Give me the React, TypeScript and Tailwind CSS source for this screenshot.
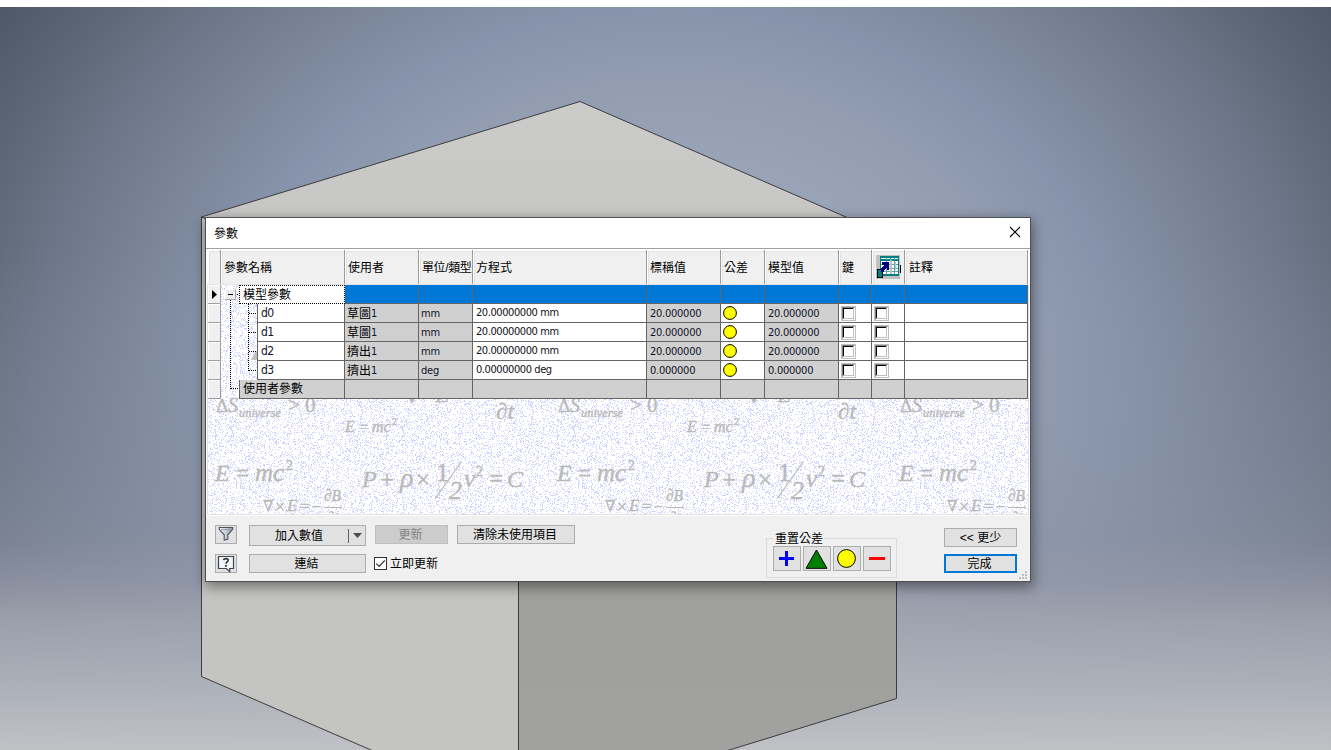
import React from "react";

const UI = "font-['DejaVu_Sans_Condensed','Noto_Sans_CJK_TC',sans-serif]";
const CJK = "font-['Liberation_Sans','Noto_Sans_CJK_TC',sans-serif]";
const GRID =
  "grid grid-cols-[13px_124px_74px_54px_174px_74px_44px_74px_33px_33px_123px]";

function buildNoise(width: number, height: number) {
  let state = 90713;
  const next = () => {
    state = (state + 0x6d2b79f5) | 0;
    let t = Math.imul(state ^ (state >>> 15), 1 | state);
    t = (t + Math.imul(t ^ (t >>> 7), 61 | t)) ^ t;
    return ((t ^ (t >>> 14)) >>> 0) / 4294967296;
  };
  let d = "";
  for (let y = 0; y < height; y++) {
    for (let x = 0; x < width; x++) {
      if (next() < 0.2) d += `M${x} ${y}h1v1h-1z`;
    }
  }
  return d;
}

const NOISE = buildNoise(171, 115);

type Glyph = { t: string; x: number; y: number; s: number; up?: boolean; w?: number };

const GLYPHS: Glyph[] = [
  { t: "Δ", x: 216, y: 412, s: 19, up: true },
  { t: "S", x: 228, y: 412, s: 20 },
  { t: "universe", x: 239, y: 417, s: 13, w: 42 },
  { t: ">", x: 288, y: 412, s: 21, up: true },
  { t: "0", x: 305, y: 412, s: 21, up: true },
  { t: "∇×E", x: 404, y: 402, s: 21, w: 45 },
  { t: "∂t", x: 496, y: 419, s: 23, w: 18 },
  { t: "E", x: 345, y: 432, s: 16 },
  { t: "=", x: 360, y: 432, s: 15, up: true },
  { t: "mc", x: 372, y: 432, s: 16 },
  { t: "2", x: 392, y: 425, s: 10, up: true },
  { t: "E", x: 215, y: 481, s: 24 },
  { t: "=", x: 236, y: 481, s: 23, up: true },
  { t: "mc", x: 255, y: 481, s: 25 },
  { t: "2", x: 286, y: 470, s: 14, up: true },
  { t: "P", x: 362, y: 487, s: 24 },
  { t: "+", x: 380, y: 488, s: 25, up: true },
  { t: "ρ", x: 400, y: 487, s: 28 },
  { t: "×", x: 416, y: 488, s: 25, up: true },
  { t: "1", x: 436, y: 481, s: 26, up: true },
  { t: "2", x: 449, y: 499, s: 26 },
  { t: "v", x: 464, y: 487, s: 25 },
  { t: "2", x: 476, y: 476, s: 14, up: true },
  { t: "=", x: 489, y: 487, s: 25, up: true },
  { t: "C", x: 507, y: 487, s: 24 },
  { t: "∇", x: 263, y: 511, s: 15, up: true },
  { t: "×", x: 275, y: 513, s: 18, up: true },
  { t: "E", x: 287, y: 511, s: 17 },
  { t: "=", x: 300, y: 512, s: 17, up: true },
  { t: "−", x: 312, y: 512, s: 16, up: true },
  { t: "∂B", x: 324, y: 501, s: 17, w: 17 },
  { t: "∂t", x: 327, y: 522, s: 15 },
];

function Formulas() {
  return (
    <svg
      className="absolute inset-0"
      width="820"
      height="229"
      viewBox="208 285 820 229"
    >
      <defs>
        <pattern id="speckle" x="208" y="285" width="171" height="115" patternUnits="userSpaceOnUse">
          <path d={NOISE} fill="#d2d2ff" shapeRendering="crispEdges" />
        </pattern>
      </defs>
      <rect x="208" y="285" width="820" height="229" fill="url(#speckle)" />
      <path d="M251 360l4-8h3v8z" fill="#c0c0c0" />
      {[0, 342, 684].map((dx) => (
        <g
          key={dx}
          transform={`translate(${dx} 0)`}
          fill="#b9b9b9"
          stroke="#b9b9b9"
          strokeWidth="0.35"
          fontFamily="'Liberation Serif', 'DejaVu Serif', serif"
        >
          {GLYPHS.map((g, i) => (
            <text
              key={i}
              x={g.x}
              y={g.y}
              fontSize={g.s}
              fontStyle={g.up ? "normal" : "italic"}
              textLength={g.w}
              lengthAdjust="spacingAndGlyphs"
            >
              {g.t}
            </text>
          ))}
          <path d="M435 499L461 462M324 507.5h18" strokeWidth="1.2" />
        </g>
      ))}
    </svg>
  );
}

function Scene() {
  return (
    <svg className="absolute inset-0" width="1331" height="750" viewBox="0 0 1331 750">
      <defs>
        <linearGradient id="topFace" x1="0" y1="101" x2="0" y2="240" gradientUnits="userSpaceOnUse">
          <stop offset="0" stopColor="#cbcbc9" />
          <stop offset="1" stopColor="#c6c6c4" />
        </linearGradient>
        <linearGradient id="rightFace" x1="0" y1="580" x2="0" y2="750" gradientUnits="userSpaceOnUse">
          <stop offset="0" stopColor="#9f9f9d" />
          <stop offset="1" stopColor="#a1a19f" />
        </linearGradient>
      </defs>
      <g strokeWidth="1" stroke="#3c3c3c">
        <path d="M201.5 217L580 101.5L896.5 239L518.5 350Z" fill="url(#topFace)" />
        <path d="M201.5 217L518.5 350V814L201.5 676.5Z" fill="#c4c4c2" />
        <path d="M518.5 350L896.5 239V698.5L518.5 815Z" fill="url(#rightFace)" />
      </g>
    </svg>
  );
}

function HeaderCell({ children, pad = "pl-[3px] pt-[2px]" }: { children?: React.ReactNode; pad?: string }) {
  return (
    <div
      className={`flex items-center overflow-hidden whitespace-nowrap border-b border-r border-[#9b9b9b] bg-[#f0f0f0] shadow-[inset_1px_1px_0_#fff,inset_2px_2px_0_#e3e3e3] ${pad}`}
    >
      {children}
    </div>
  );
}

function TableIcon() {
  return (
    <svg width="25" height="24" viewBox="0 0 25 24" shapeRendering="crispEdges">
      <path d="M0 0h24v24H0z" fill="#c0c0c0" />
      <path d="M4 1h19v20H4z" fill="#008080" />
      <path d="M5 3h17v1H5zM5 6h17v13H5z" fill="#fff" />
      <path
        d="M5 9h17v1H5zM5 13h17v1H5zM5 16h17v1H5zM10 3h1v2h-1zM14 3h1v2h-1zM18 3h1v2h-1zM10 6h1v13h-1zM18 6h1v13h-1z"
        fill="#55a9a9"
      />
      <path d="M14 5h2v14h-2zM19 7h1v8h-1z" fill="#c0c0c0" />
      <path d="M6 7H13V15H11V13H10V14H9V15H8V17H7V18H4V15H5V14H6V12H7V11H8V10H6Z" fill="#000080" />
      <path d="M1 14h6v9H1z" fill="#000" />
      <path d="M2 15h4v7H2z" fill="#008080" />
      <path d="M5 13h2v4H5z" fill="#000080" />
      <path d="M24 10h1v8h-1z" fill="#000" />
    </svg>
  );
}

function Dot() {
  return (
    <svg width="14" height="14" viewBox="0 0 14 14">
      <circle cx="7" cy="7" r="6.4" fill="#ff0" stroke="#000" strokeWidth="1" />
    </svg>
  );
}

function OldCheck() {
  return (
    <svg width="15" height="15" viewBox="0 0 15 15" shapeRendering="crispEdges">
      <path d="M0 0h15v15H0z" fill="#c0c0c0" />
      <path d="M2 2h12v12H2z" fill="#fff" />
      <path d="M2 12h10V2h1v11H2z" fill="#c0c0c0" />
      <path d="M1 1h12v1H2v11H1z" fill="#808080" />
      <path d="M2 2h10v1H3v9H2z" fill="#000" />
    </svg>
  );
}

function Cell({ tone = "", children }: { tone?: string; children?: React.ReactNode }) {
  return (
    <div
      className={`flex items-center overflow-hidden whitespace-pre border-b border-r border-[#646464] ${tone}`}
    >
      {children}
    </div>
  );
}

function RowHead({ current = false }: { current?: boolean }) {
  return (
    <div className="flex items-center border-b border-r border-[#a0a0a0] bg-[#f0f0f0] pl-[4px] shadow-[inset_1px_1px_0_#fff]">
      {current && (
        <svg width="5" height="9" viewBox="0 0 5 9">
          <path d="M0 0L5 4.5L0 9Z" fill="#000" />
        </svg>
      )}
    </div>
  );
}

const ROWS = [
  { name: "d0", user: "草圖", unit: "mm", eq: "20.00000000 mm", val: "20.000000" },
  { name: "d1", user: "草圖", unit: "mm", eq: "20.00000000 mm", val: "20.000000" },
  { name: "d2", user: "擠出", unit: "mm", eq: "20.00000000 mm", val: "20.000000" },
  { name: "d3", user: "擠出", unit: "deg", eq: "0.00000000 deg", val: "0.000000" },
];

const GREY = "bg-[#d0d0d0] pl-[3px] pt-[2px] text-[#101028]";

function ParamRow({ row }: { row: (typeof ROWS)[number] }) {
  return (
    <div className={`${GRID} h-[19px] text-[11px] leading-[16px] tracking-[-0.25px] ${UI}`}>
      <RowHead />
      <div className="flex">
        <div className="w-[36px]" />
        <div className="flex flex-1 items-center border-b border-l border-r border-[#646464] bg-white pl-[3px] text-[12px] tracking-[-0.5px] text-[#101028]">
          {row.name}
        </div>
      </div>
      <Cell tone="bg-[#d0d0d0] pl-[2px] pt-[1px] text-black">
        <span className="text-[12px] tracking-normal">{row.user}</span>
        <span className="text-[#101028]">1</span>
      </Cell>
      <Cell tone="bg-[#d0d0d0] pl-[2px] pt-[2px] text-[#101028]">{row.unit}</Cell>
      <Cell tone="bg-white pl-[3px] tracking-[-0.42px] text-[#101018]">{row.eq}</Cell>
      <Cell tone={GREY}>{row.val}</Cell>
      <Cell tone="bg-white pl-[2px]">
        <Dot />
      </Cell>
      <Cell tone={GREY}>{row.val}</Cell>
      <Cell tone="bg-white pl-[2px]">
        <OldCheck />
      </Cell>
      <Cell tone="bg-white pl-[2px]">
        <OldCheck />
      </Cell>
      <Cell tone="bg-white" />
    </div>
  );
}

function Tree() {
  return (
    <svg className="absolute left-[13px] top-0" width="38" height="114" viewBox="221 285 38 114">
      <g stroke="#000" strokeWidth="1" strokeDasharray="1 1" shapeRendering="crispEdges">
        <path d="M230.5 300V389M231 388.5H239M235 294.5H239M248.5 304V371M249 313.5H257M249 332.5H257M249 351.5H257M249 370.5H257" />
      </g>
      <path d="M225 289h11v11h-11z" fill="#a8a8a8" />
      <path d="M225 289h10v10h-10z" fill="#fff" />
      <path d="M226 290h9v9h-9z" fill="#ececec" />
      <path d="M228 294h5v1h-5z" fill="#000" />
    </svg>
  );
}

function Btn({ className = "", children }: { className?: string; children?: React.ReactNode }) {
  return (
    <button
      type="button"
      className={`flex shrink-0 items-center justify-center whitespace-pre border border-[#adadad] bg-[#e1e1e1] text-[12px] leading-[15px] text-black ${className}`}
    >
      {children}
    </button>
  );
}

function FilterIcon() {
  return (
    <svg className="-mt-[2px]" width="16" height="16" viewBox="0 0 16 16">
      <defs>
        <linearGradient id="funnel" x1="0" x2="1" y1="0" y2="0">
          <stop offset="0" stopColor="#fff" />
          <stop offset="1" stopColor="#8b99a8" />
        </linearGradient>
      </defs>
      <path d="M1.3 1.5h13.4v1.8L9.8 8.8v4.4l-3.6.9V8.8L1.3 3.3z" fill="url(#funnel)" stroke="#4a5560" strokeWidth="1.1" />
      <path d="M3 3.6h10" stroke="#8c98a4" strokeWidth="0.9" />
    </svg>
  );
}

function HelpIcon() {
  return (
    <svg width="18" height="18" viewBox="0 0 18 18">
      <path d="M1.5 1.5h15v12h-3.8v3.2L9.3 13.5H1.5z" fill="#f3f5f7" stroke="#3c4650" strokeWidth="1.2" />
      <path
        d="M6.6 5.2C6.8 3.2 11 3 11.1 5.2C11.1 6.9 9 6.9 9 8.8"
        fill="none"
        stroke="#2c3640"
        strokeWidth="1.6"
      />
      <path d="M8.1 9.9h1.8v1.8H8.1z" fill="#2c3640" />
    </svg>
  );
}

function Footer() {
  return (
    <div className="relative flex h-[65px] bg-[#f0f0f0] pl-[9px] pt-[9px]">
      <div className="flex w-[360px] flex-col">
        <div className="flex h-[29px] items-start">
          <Btn className="h-[19px] w-[22px]">
            <FilterIcon />
          </Btn>
          <Btn className="ml-[12px] h-[21px] w-[117px]">
            <span className="w-[97px] pr-[6px] pt-[2px] text-center">加入數值</span>
            <span className="-ml-[3px] h-[14px] w-px bg-[#606060]" />
            <svg className="ml-[4px]" width="9" height="5" viewBox="0 0 9 5">
              <path d="M0 0h9L4.5 5z" fill="#4c4c4c" />
            </svg>
          </Btn>
          <Btn className="ml-[9px] h-[19px] w-[73px] !border-[#bfbfbf] !bg-[#cccccc] pr-[2px] pt-[2px] !text-[#838383]">
            更新
          </Btn>
          <Btn className="ml-[9px] h-[19px] w-[118px] pr-[2px] pt-[2px]">清除未使用項目</Btn>
        </div>
        <div className="flex h-[19px] items-center">
          <Btn className="h-[19px] w-[22px]">
            <HelpIcon />
          </Btn>
          <Btn className="ml-[12px] h-[19px] w-[117px] pr-[2px] pt-[2px]">連結</Btn>
          <div className="ml-[8px] flex h-[13px] w-[13px] items-center justify-center border border-[#333] bg-white">
            <svg width="11" height="11" viewBox="0 0 11 11">
              <path d="M1.3 5.6L4.2 8.4L9.8 2.4" fill="none" stroke="#333" strokeWidth="1.3" />
            </svg>
          </div>
          <span className="ml-[3px] pt-[2px] text-[12px] leading-[15px]">立即更新</span>
        </div>
      </div>

      <div className="ml-[191px] mt-[6px] flex h-[47px] w-[131px] flex-col">
        <div className="flex h-[15px] items-center">
          <span className="h-px w-[7px] bg-[#dcdcdc]" />
          <span className="w-[51px] pl-[2px] pt-[2px] text-[12px] leading-[15px]">重置公差</span>
          <span className="h-px flex-1 bg-[#dcdcdc]" />
        </div>
        <div className="-mt-[7px] flex flex-1 gap-[2px] border-x border-b border-[#dcdcdc] pl-[6px] pt-[7px]">
          <Btn className="h-[25px] w-[28px] pr-[1px]">
            <svg width="15" height="15" viewBox="0 0 15 15">
              <path d="M6 0h3v6h6v3H9v6H6V9H0V6h6z" fill="#00f" />
            </svg>
          </Btn>
          <Btn className="h-[25px] w-[28px] pr-[1px]">
            <svg width="23" height="20" viewBox="0 0 23 20">
              <path d="M11.5 1L22 19.3H1z" fill="#008000" stroke="#000" strokeWidth="1" />
            </svg>
          </Btn>
          <Btn className="h-[25px] w-[28px] pr-[1px]">
            <svg width="19" height="19" viewBox="0 0 19 19">
              <circle cx="9.5" cy="9.5" r="8.9" fill="#ff0" stroke="#000" strokeWidth="1" />
            </svg>
          </Btn>
          <Btn className="h-[25px] w-[28px]">
            <svg width="16" height="3" viewBox="0 0 16 3">
              <path d="M0 0h16v3H0z" fill="#f00" />
            </svg>
          </Btn>
        </div>
      </div>

      <div className="ml-[47px] mt-[3px] flex w-[73px] flex-col gap-[7px]">
        <Btn className="h-[19px] w-[73px] pt-[2px]">&lt;&lt; 更少</Btn>
        <Btn className="h-[19px] w-[73px] !border-2 !border-[#0078d7] pr-[2px] pt-[2px]">完成</Btn>
      </div>

      <svg className="absolute bottom-[1px] right-[2px]" width="9" height="9" viewBox="0 0 9 9">
        <path d="M6 0h2v2H6zM3 3h2v2H3zM6 3h2v2H6zM0 6h2v2H0zM3 6h2v2H3zM6 6h2v2H6z" fill="#bdbdbd" />
      </svg>
    </div>
  );
}

function ParametersDialog() {
  const headers = ["方程式", "標稱值", "公差", "模型值", "鍵"];
  return (
    <div
      className={`absolute left-[205px] top-[217px] flex h-[365px] w-[826px] flex-col border border-[#505050] bg-[#f0f0f0] text-black shadow-[1px_4px_12px_1px_rgba(0,0,0,0.42)] ${CJK}`}
    >
      <div className="flex h-[30px] shrink-0 items-center justify-between bg-white pl-[8px] pr-[9px]">
        <span className="pt-[2px] text-[12px] leading-[16px]">參數</span>
        <svg className="-mt-[2px]" width="12" height="12" viewBox="0 0 12 12">
          <path d="M1 1L11 11M11 1L1 11" stroke="#000" strokeWidth="1.1" />
        </svg>
      </div>

      <div className="h-[268px] border-b-2 border-t border-b-white border-t-[#a0a0a0] bg-white pl-[2px] pt-px">
        <div className={`${GRID} h-[35px] w-[820px] text-[12px] leading-[16px]`}>
          <HeaderCell />
          <HeaderCell>參數名稱</HeaderCell>
          <HeaderCell>使用者</HeaderCell>
          <HeaderCell pad="pl-[3px] pt-[2px] tracking-[-0.4px]">單位/類型</HeaderCell>
          {headers.map((h) => (
            <HeaderCell key={h}>{h}</HeaderCell>
          ))}
          <HeaderCell pad="pl-[4px]">
            <TableIcon />
          </HeaderCell>
          <HeaderCell pad="pl-[4px] pt-[2px]">註釋</HeaderCell>
        </div>

        <div className="relative h-[229px] w-[820px] overflow-hidden bg-white outline outline-1 outline-[#e3e3e3]">
          <Formulas />
          <div className="relative">
            <div className={`${GRID} h-[19px] text-[12px] leading-[16px]`}>
              <RowHead current />
              <div className="flex">
                <div className="w-[18px]" />
                <div className="flex flex-1 items-center border border-dotted border-black bg-white pl-[3px]">
                  模型參數
                </div>
              </div>
              {[0, 1, 2, 3, 4, 5, 6, 7, 8].map((i) => (
                <Cell key={i} tone="bg-[#0078d7]" />
              ))}
            </div>
            {ROWS.map((r) => (
              <ParamRow key={r.name} row={r} />
            ))}
            <div className={`${GRID} h-[19px] text-[12px] leading-[16px]`}>
              <RowHead />
              <div className="flex">
                <div className="w-[18px]" />
                <div className="flex flex-1 items-center border-b border-l border-r border-[#646464] bg-[#d0d0d0] pl-[3px]">
                  使用者參數
                </div>
              </div>
              {[0, 1, 2, 3, 4, 5, 6, 7, 8].map((i) => (
                <Cell key={i} tone="bg-[#d0d0d0]" />
              ))}
            </div>
            <Tree />
          </div>
        </div>
      </div>

      <Footer />
    </div>
  );
}

export default function App() {
  return (
    <div className="relative h-[750px] w-[1331px] overflow-hidden bg-[linear-gradient(to_bottom,rgba(150,160,178,0)_250px,rgba(142,152,170,0.3)_450px,rgba(144,151,167,0.55)_540px,rgba(148,153,168,0.8)_580px,rgba(160,164,175,0.92)_620px,rgba(176,180,188,0.98)_695px,#c0c1c5_750px),radial-gradient(900px_750px_at_672px_380px,#9fa9bb_0%,#9ca6b9_25%,#929db2_40%,#8693aa_50%,#7b869a_60%,#6b7688_71%,#5f6878_79%,#4d5767_90%)]">
      <Scene />
      <div className="relative h-[7px] bg-white" />
      <ParametersDialog />
    </div>
  );
}
